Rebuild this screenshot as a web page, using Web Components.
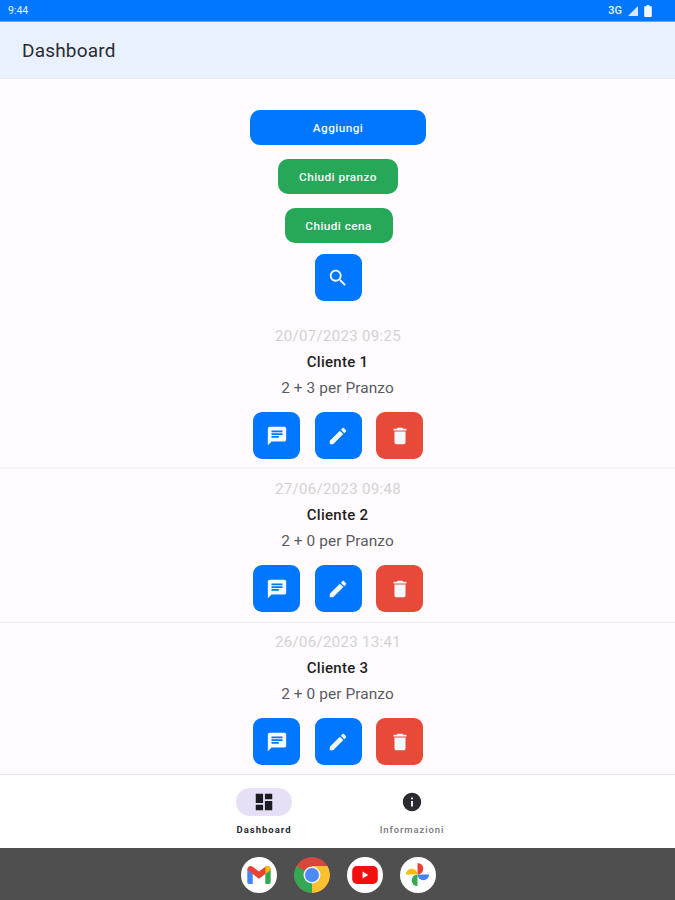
<!DOCTYPE html>
<html lang="it"><head><meta charset="utf-8"><title>Dashboard</title>
<style>
html,body{margin:0;height:100%}
body{width:675px;height:900px;overflow:hidden;font-family:Roboto,"Liberation Sans",sans-serif;display:flex;flex-direction:column;background:#fffbfe}
</style></head><body>
<x-status></x-status>
<x-appbar>Dashboard</x-appbar>
<x-main>
  <x-btn slot="actions" color="blue" w="176">Aggiungi</x-btn>
  <x-btn slot="actions" color="green" w="120">Chiudi pranzo</x-btn>
  <x-btn slot="actions" color="green" w="108" shift="1">Chiudi cena</x-btn>
  <x-icon-btn slot="search" icon="search" color="blue"></x-icon-btn>
  <x-entry date="20/07/2023 09:25" name="Cliente 1" info="2 + 3 per Pranzo" line-gap="8" line-color="#f6f3f6"></x-entry>
  <x-entry date="27/06/2023 09:48" name="Cliente 2" info="2 + 0 per Pranzo" line-gap="9.5" line-color="#ecebed"></x-entry>
  <x-entry date="26/06/2023 13:41" name="Cliente 3" info="2 + 0 per Pranzo"></x-entry>
</x-main>
<x-nav></x-nav>
<x-dock></x-dock>
<script>
const ICONS={
search:'M15.5 14h-.79l-.28-.27C15.41 12.59 16 11.11 16 9.5 16 5.91 13.09 3 9.5 3S3 5.91 3 9.5 5.91 16 9.5 16c1.61 0 3.09-.59 4.23-1.57l.27.28v.79l5 4.99L20.49 19l-4.99-5zm-6 0C7.01 14 5 11.99 5 9.5S7.01 5 9.5 5 14 7.01 14 9.5 11.99 14 9.5 14z',
message:'M20 2H4c-1.1 0-1.99.9-1.99 2L2 22l4-4h14c1.1 0 2-.9 2-2V4c0-1.1-.9-2-2-2zM6 9h12v2H6V9zm8 5H6v-2h8v2zm4-6H6V6h12v2z',
edit:'M3 17.25V21h3.75L17.81 9.94l-3.75-3.75L3 17.25zM20.71 7.04c.39-.39.39-1.02 0-1.41l-2.34-2.34c-.39-.39-1.02-.39-1.41 0l-1.83 1.83 3.75 3.75 1.83-1.83z',
del:'M6 19c0 1.1.9 2 2 2h8c1.1 0 2-.9 2-2V7H6v12zM19 4h-3.5l-1-1h-5l-1 1H5v2h14V4z',
dashboard:'M3 13h8V3H3v10zm0 8h8v-6H3v6zm10 0h8V11h-8v10zm0-18v6h8V3h-8z',
info:'M12 2C6.48 2 2 6.48 2 12s4.48 10 10 10 10-4.48 10-10S17.52 2 12 2zm1 15h-2v-6h2v6zm0-8h-2V7h2v2z'};
const COLORS={blue:'#0077fe',green:'#27a858',red:'#e84a39'};
class Base extends HTMLElement{
  render(html){if(!this.shadowRoot)this.attachShadow({mode:'open'});this.shadowRoot.innerHTML=html;}
}
customElements.define('x-status',class extends Base{connectedCallback(){this.render(`<style>
:host{display:flex;flex:none;align-items:center;justify-content:space-between;height:21px;padding:0 23px 0 8px;background:#0077fe;border-bottom:1px solid #5aa6ff;color:#e6f1ff;font-size:10.5px;font-weight:400}
.r{display:flex;align-items:center}.r svg{display:block}
.g{font-size:11px;font-weight:500}
</style><span>9:44</span><span class="r"><span class="g">3G</span>
<svg width="10" height="10" viewBox="0 0 10 10" style="margin-left:6px"><path d="M10 0v10H0z" fill="#d8e8ff"/></svg>
<svg width="8" height="12" viewBox="0 0 8 12" style="margin-left:6px"><path d="M2.500 0h3v1.200H7a.8.8 0 0 1 .8.8v9.200a.8.8 0 0 1-.8.8H1a.8.8 0 0 1-.8-.8V2A.8.8 0 0 1 1 1.200h1.500z" fill="#f2f7ff"/></svg></span>`);}});
customElements.define('x-appbar',class extends Base{connectedCallback(){this.render(`<style>
:host{display:flex;flex:none;align-items:center;height:56px;padding:0 22px;background:#e9f1fe;border-bottom:1px solid #e9e7ee;color:#2a2b30;font-size:19px;letter-spacing:.2px}
</style><slot></slot>`);}});
customElements.define('x-btn',class extends Base{connectedCallback(){const c=COLORS[this.getAttribute('color')],w=this.getAttribute('w'),s=this.getAttribute('shift')||0;this.render(`<style>
:host{display:flex;align-items:center;justify-content:center;box-sizing:border-box;width:${w}px;height:35px;margin-left:${s}px;border-radius:10px;background:${c};color:#f4f8ff;font-size:11.8px;font-weight:500;letter-spacing:.42px}
</style><slot></slot>`);}});
customElements.define('x-icon-btn',class extends Base{connectedCallback(){const c=COLORS[this.getAttribute('color')],p=ICONS[this.getAttribute('icon')];this.render(`<style>
:host{display:flex;align-items:center;justify-content:center;width:47px;height:47px;border-radius:9px;background:${c}}
svg{display:block}
</style><svg width="22" height="22" viewBox="0 0 24 24"><path fill="#f4f8ff" d="${p}"/></svg>`);}});
customElements.define('x-main',class extends Base{connectedCallback(){this.render(`<style>
:host{display:block;flex:1;min-height:0;overflow:hidden}
.actions{display:flex;flex-direction:column;align-items:center;gap:14px;padding:31px 0 0 1px}
.search{display:flex;justify-content:center;padding:11px 0 13px 1px}
</style><div class="actions"><slot name="actions"></slot></div><div class="search"><slot name="search"></slot></div><slot></slot>`);}});
customElements.define('x-entry',class extends Base{connectedCallback(){const a=n=>this.getAttribute(n);const lg=a('line-gap'),lc=a('line-color');this.render(`<style>
:host{display:flex;flex-direction:column;align-items:center;box-sizing:border-box;height:153px;padding:9px 0 0 1px;text-align:center}
.d{height:26px;line-height:26px;font-size:15px;color:#d2d2d4;letter-spacing:.33px}
.n{height:26px;line-height:26px;font-size:15px;font-weight:500;color:#1f1f22;letter-spacing:.25px;margin-left:-1px}
.i{height:26px;line-height:26px;font-size:15.4px;color:#5a5b5f;letter-spacing:.1px;margin-left:-1px}
.b{display:flex;flex:none;gap:14.5px;margin-top:11px}
.l{flex:none;align-self:stretch;height:1.5px;margin-left:-1px}
</style><div class="d">${a('date')}</div><div class="n">${a('name')}</div><div class="i">${a('info')}</div>
<div class="b"><x-icon-btn icon="message" color="blue"></x-icon-btn><x-icon-btn icon="edit" color="blue"></x-icon-btn><x-icon-btn icon="del" color="red"></x-icon-btn></div>
${lg?`<div class="l" style="margin-top:${lg}px;background:${lc}"></div>`:''}`);}});
customElements.define('x-nav',class extends Base{connectedCallback(){this.render(`<style>
:host{display:flex;flex:none;justify-content:center;box-sizing:border-box;height:74px;background:#fff;border-top:1px solid #e6e4ea;gap:36px;padding:13px 0 0 1px}
.t{display:flex;flex-direction:column;align-items:center;width:112px;font-size:9.5px;font-weight:700;letter-spacing:1px;white-space:nowrap}
.p{display:flex;align-items:center;justify-content:center;width:56px;height:28px;border-radius:14px;margin-bottom:7px}
.p svg{display:block}
.l{line-height:14px}
.on .p{background:#e6dff5}.on .l{color:#2a2a30}
.off .l{color:#77777c;font-weight:500;letter-spacing:.9px}
</style><div class="t on"><div class="p"><svg width="22" height="22" viewBox="0 0 24 24"><path fill="#1d1b22" d="${ICONS.dashboard}"/></svg></div><div class="l">Dashboard</div></div>
<div class="t off"><div class="p"><svg width="22" height="22" viewBox="0 0 24 24"><path fill="#2a2a30" d="${ICONS.info}"/></svg></div><div class="l">Informazioni</div></div>`);}});
customElements.define('x-dock',class extends Base{connectedCallback(){this.render(`<style>
:host{display:flex;flex:none;justify-content:center;align-items:center;gap:17px;height:52px;padding:1px 0 0 1px;box-sizing:border-box;background:#4f4f4f}
.c{width:36px;height:36px;border-radius:50%;background:#fff;display:flex;align-items:center;justify-content:center;overflow:hidden}
svg{display:block}
</style>
<div class="c" title="Gmail"><svg width="24" height="18" viewBox="0 0 26 20">
<path d="M0 4v14a2 2 0 0 0 2 2h4V8z" fill="#4285f4"/><path d="M26 4v14a2 2 0 0 1-2 2h-4V8z" fill="#34a853"/>
<path d="M0 4.500C0 1 3-1 6 .8L13 6l7-5.200C23-1 26 1 26 4.500L20 9l-7 5.200L6 9z" fill="#ea4335"/><path d="M20 .8C23-1 26 1 26 4.500L20 9z" fill="#fbbc04"/></svg></div>
<div class="c" title="Chrome" style="background:none"><svg width="36" height="36" viewBox="0 0 36 36">
<circle cx="18" cy="18" r="18" fill="#d9463a"/>
<path d="M18 18 2.400 9A18 18 0 0 0 18 36l9-15.600z" fill="#34a853"/>
<path d="M18 18 18 36A18 18 0 0 0 33.600 9H18z" fill="#fbc02d"/>
<circle cx="18" cy="18" r="8.500" fill="#eef2f8"/><circle cx="18" cy="18" r="7" fill="#4e8af4"/></svg></div>
<div class="c" title="YouTube"><svg width="26" height="18" viewBox="0 0 27 19"><rect width="27" height="19" rx="5" fill="#f40f0f"/><path d="M11 5.800v7.400l6-3.700z" fill="#fff"/></svg></div>
<div class="c" title="Photos"><svg width="25" height="25" viewBox="0 0 28 28">
<path d="M14 14V1a6.500 6.500 0 0 1 0 13z" fill="#ea4335"/>
<path d="M14 14H27a6.500 6.500 0 0 1-13 0z" fill="#4285f4"/>
<path d="M14 14V27a6.500 6.500 0 0 1 0-13z" fill="#34a853"/>
<path d="M14 14H1a6.500 6.500 0 0 1 13 0z" fill="#fbbc04"/></svg></div>`);}});
</script>
</body></html>
